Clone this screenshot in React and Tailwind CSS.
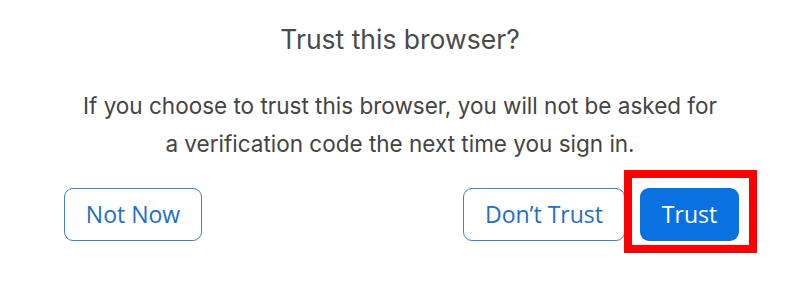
import React from 'react';

export default function App() {
  return (
    <div className="w-[800px] h-[295px] bg-white flex flex-col items-center pt-[19px] font-['Inter',sans-serif]">
      <h1 className="text-[26.5px] leading-[40px] text-[#4a4a4a] font-normal">Trust this browser?</h1>
      <p className="mt-[28px] text-[22.5px] leading-[38px] text-[#444] text-center whitespace-nowrap">
        If you choose to trust this browser, you will not be asked for
        <br />
        a verification code the next time you sign in.
      </p>

      {/* Actions */}
      <div className="w-full flex items-center justify-between pl-[64px] pr-[61px] mt-[25px] font-['Open_Sans',sans-serif]">
        <button className="w-[138px] h-[53px] rounded-[9px] border border-[#3d7fd1] text-[#1d6fc8] text-[23px]">
          Not Now
        </button>
        <div className="flex items-center gap-[15px]">
          <button className="w-[162px] h-[53px] rounded-[9px] border border-[#3d7fd1] text-[#1d6fc8] text-[23px]">
            Don’t Trust
          </button>
          <div className="relative">
            <button className="w-[99px] h-[53px] rounded-[9px] bg-[#0a72e0] text-white text-[23px]">
              Trust
            </button>
            <div className="absolute -left-[16px] -top-[18px] w-[133px] h-[83px] border-[8px] border-[#f00] pointer-events-none" />
          </div>
        </div>
      </div>
    </div>
  );
}
